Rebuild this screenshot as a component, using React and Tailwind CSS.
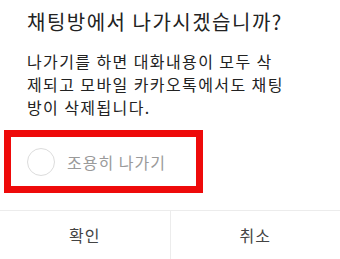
export default function App() {
  return (
    <div
      className="w-[340px] h-[259px] bg-white overflow-hidden flex flex-col"
      style={{ fontFamily: '"Noto Sans CJK KR", "Noto Sans", sans-serif' }}
    >
      <div className="px-[27px] pt-[8px]">
        <h1 className="text-[20px] leading-[28px] text-[#222] tracking-[1.5px]">채팅방에서 나가시겠습니까?</h1>
        <p className="mt-[14px] text-[16px] leading-[23px] text-[#222] tracking-[1.4px]">
          나가기를 하면 대화내용이 모두 삭<br />
          제되고 모바일 카카오톡에서도 채팅<br />
          방이 삭제됩니다.
        </p>
      </div>
      <div className="ml-[4px] mt-[11px] w-[199px] h-[63px] border-[7px] border-[#ee0a0a] flex items-center pl-[16px] gap-[12px]">
        <span className="w-[28px] h-[28px] rounded-full border border-[#dcdcdc]" />
        <span className="text-[16px] text-[#9a9a9a] tracking-[1px]">조용히 나가기</span>
      </div>
      <div className="mt-auto h-[49px] border-t border-[#ececec] flex">
        <button className="flex-1 text-[16px] text-[#444] tracking-[1px] border-r border-[#ececec]">확인</button>
        <button className="flex-1 text-[16px] text-[#444] tracking-[1px]">취소</button>
      </div>
    </div>
  )
}
